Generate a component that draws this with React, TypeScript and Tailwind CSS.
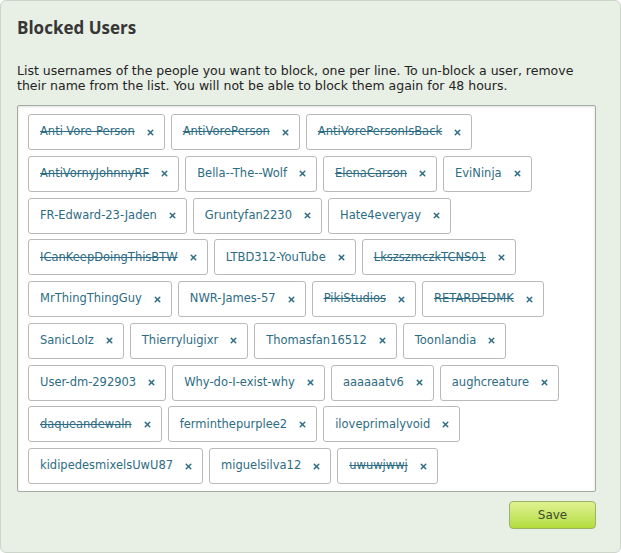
import { X } from "lucide-react";

type BlockedUser = {
  name: string;
  expired?: boolean;
};

const users: BlockedUser[] = [
  { name: "Anti-Vore-Person", expired: true },
  { name: "AntiVorePerson", expired: true },
  { name: "AntiVorePersonIsBack", expired: true },
  { name: "AntiVornyJohnnyRF", expired: true },
  { name: "Bella--The--Wolf" },
  { name: "ElenaCarson", expired: true },
  { name: "EviNinja" },
  { name: "FR-Edward-23-Jaden" },
  { name: "Gruntyfan2230" },
  { name: "Hate4everyay" },
  { name: "ICanKeepDoingThisBTW", expired: true },
  { name: "LTBD312-YouTube" },
  { name: "LkszszmczkTCNS01", expired: true },
  { name: "MrThingThingGuy" },
  { name: "NWR-James-57" },
  { name: "PikiStudios", expired: true },
  { name: "RETARDEDMK", expired: true },
  { name: "SanicLoIz" },
  { name: "Thierryluigixr" },
  { name: "Thomasfan16512" },
  { name: "Toonlandia" },
  { name: "User-dm-292903" },
  { name: "Why-do-I-exist-why" },
  { name: "aaaaaatv6" },
  { name: "aughcreature" },
  { name: "daqueandewaln", expired: true },
  { name: "ferminthepurplee2" },
  { name: "iloveprimalyvoid" },
  { name: "kidipedesmixelsUwU87" },
  { name: "miguelsilva12" },
  { name: "uwuwjwwj", expired: true },
];

const Tag = ({ user }: { user: BlockedUser }) => (
  <span className="flex h-[36px] items-center gap-[11px] rounded-[3px] border border-[#b9b9b9] bg-white pl-[11px] pr-[9px] text-[11.5px] text-[#2d6c82]">
    <span className={user.expired ? "line-through" : ""}>{user.name}</span>
    <X className="h-[9px] w-[9px]" strokeWidth={4} />
  </span>
);

export default function App() {
  return (
    <div className="h-[553px] w-full overflow-hidden rounded-[6px] border border-[#cdd5ca] bg-[#e8efe5] pl-[16px] pr-[24px] font-['DejaVu_Sans',Verdana,sans-serif]">
      <h1 className="pt-[14px] font-['Open_Sans',sans-serif] text-[17px] font-bold leading-[26px] text-[#363636]">
        Blocked Users
      </h1>

      <p className="mt-[22px] text-[12.5px] leading-[15px] text-[#242424]">
        List usernames of the people you want to block, one per line. To un-block a user, remove
        their name from the list. You will not be able to block them again for 48 hours.
      </p>

      <div className="mt-[12px] flex h-[387px] flex-wrap content-start gap-x-[6px] gap-y-[5.75px] rounded-[2px] border border-[#a3aba1] bg-white pl-[10px] pr-[8px] pt-[8px] shadow-[inset_0_1px_3px_rgba(0,0,0,0.12)]">
        {users.map((u) => (
          <Tag key={u.name} user={u} />
        ))}
      </div>

      <div className="mt-[9px] flex justify-end">
        <button className="h-[28px] w-[87px] rounded-[4px] border border-[#9bb26a] bg-gradient-to-b from-[#e0f290] to-[#b3dc3a] text-[12px] text-[#3d4b2c]">
          Save
        </button>
      </div>
    </div>
  );
}
